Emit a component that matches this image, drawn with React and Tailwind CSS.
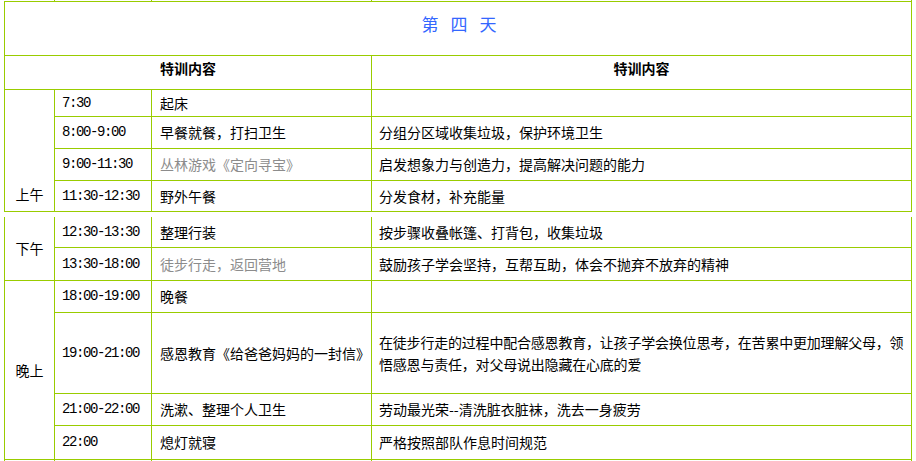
import React from "react";

const G = "bg-[#99cc00]";
const cjk = { fontFamily: '"Noto Sans CJK SC", "Noto Sans", sans-serif' };
const mono = { fontFamily: '"Liberation Mono", "DejaVu Sans Mono", monospace' };

function Time({ children }) {
  return (
    <div className="bg-white flex items-center pl-[7px] text-[14px] tracking-[-1.4px] text-black whitespace-nowrap" style={mono}>
      {children}
    </div>
  );
}

function Txt({ children, gray, pl = "pl-[8px]" }) {
  return (
    <div className={`bg-white flex items-center ${pl} text-[14px] whitespace-nowrap ${gray ? "text-[#8c8c8c]" : "text-black"}`} style={cjk}>
      {children}
    </div>
  );
}

export default function App() {
  return (
    <div className="w-[916px] h-[461px] bg-white overflow-hidden" style={cjk}>
      {/* remnant of previous rows */}
      <div className="flex h-px">
        <div className="w-[54px]" />
        <div className={`w-px ${G}`} />
        <div className="w-[96px]" />
        <div className={`w-px ${G}`} />
        <div className="w-[219px]" />
        <div className={`w-px ${G}`} />
        <div className="w-[539px]" />
        <div className={`w-px ${G}`} />
      </div>

      {/* upper block */}
      <div className={`ml-[4px] w-[908px] ${G} p-px grid gap-px grid-cols-[49px_96px_219px_539px] grid-rows-[53px_33px_26px_31px_31px_30px]`}>
        <div className="col-span-4 bg-white flex items-center justify-center pb-[11px] pl-[2px]">
          <div className="flex gap-[12px] text-[17px] text-[#3366ff] leading-none" style={cjk}>
            <span>第</span>
            <span>四</span>
            <span>天</span>
          </div>
        </div>
        <div className="col-span-3 bg-white flex items-center justify-center pb-[9px] text-[14px] font-bold text-black">
          特训内容
        </div>
        <div className="bg-white flex items-center justify-center pb-[9px] text-[14px] font-bold text-black">
          特训内容
        </div>

        <div className="row-span-4 bg-white flex items-end justify-center pb-[7px] text-[14px] leading-[20px] text-black">
          上午
        </div>
        <Time>7:30</Time>
        <Txt>起床</Txt>
        <Txt pl="pl-[7px]"></Txt>

        <Time>8:00-9:00</Time>
        <Txt>早餐就餐，打扫卫生</Txt>
        <Txt pl="pl-[7px]">分组分区域收集垃圾，保护环境卫生</Txt>

        <Time>9:00-11:30</Time>
        <Txt gray>丛林游戏《定向寻宝》</Txt>
        <Txt pl="pl-[7px]">启发想象力与创造力，提高解决问题的能力</Txt>

        <Time>11:30-12:30</Time>
        <Txt>野外午餐</Txt>
        <Txt pl="pl-[7px]">分发食材，补充能量</Txt>
      </div>

      <div className="h-[5px]" />

      {/* lower block */}
      <div className={`ml-[4px] w-[908px] ${G} px-px pb-px grid gap-px grid-cols-[49px_96px_219px_539px] grid-rows-[30px_32px_31px_80px_31px_33px_30px]`}>
        <div className="row-span-2 bg-white flex items-center justify-center text-[14px] text-black">
          下午
        </div>
        <Time>12:30-13:30</Time>
        <Txt>整理行装</Txt>
        <Txt pl="pl-[7px]">按步骤收叠帐篷、打背包，收集垃圾</Txt>

        <Time>13:30-18:00</Time>
        <Txt gray>徒步行走，返回营地</Txt>
        <Txt pl="pl-[7px]">鼓励孩子学会坚持，互帮互助，体会不抛弃不放弃的精神</Txt>

        <div className="row-span-4 bg-white flex items-center justify-center text-[14px] text-black">
          晚上
        </div>
        <Time>18:00-19:00</Time>
        <Txt>晚餐</Txt>
        <Txt pl="pl-[7px]"></Txt>

        <Time>19:00-21:00</Time>
        <Txt>感恩教育《给爸爸妈妈的一封信》</Txt>
        <div className="bg-white flex items-center pl-[7px] text-[14px] leading-[22px] text-black whitespace-nowrap tracking-[-0.2px]">
          <div>
            在徒步行走的过程中配合感恩教育，让孩子学会换位思考，在苦累中更加理解父母，领
            <br />
            悟感恩与责任，对父母说出隐藏在心底的爱
          </div>
        </div>

        <Time>21:00-22:00</Time>
        <Txt>洗漱、整理个人卫生</Txt>
        <Txt pl="pl-[7px]">劳动最光荣--清洗脏衣脏袜，洗去一身疲劳</Txt>

        <Time>22:00</Time>
        <Txt>熄灯就寝</Txt>
        <Txt pl="pl-[7px]">严格按照部队作息时间规范</Txt>

        <div className="bg-white" />
        <div className="bg-white" />
        <div className="bg-white" />
        <div className="bg-white" />
      </div>
    </div>
  );
}
